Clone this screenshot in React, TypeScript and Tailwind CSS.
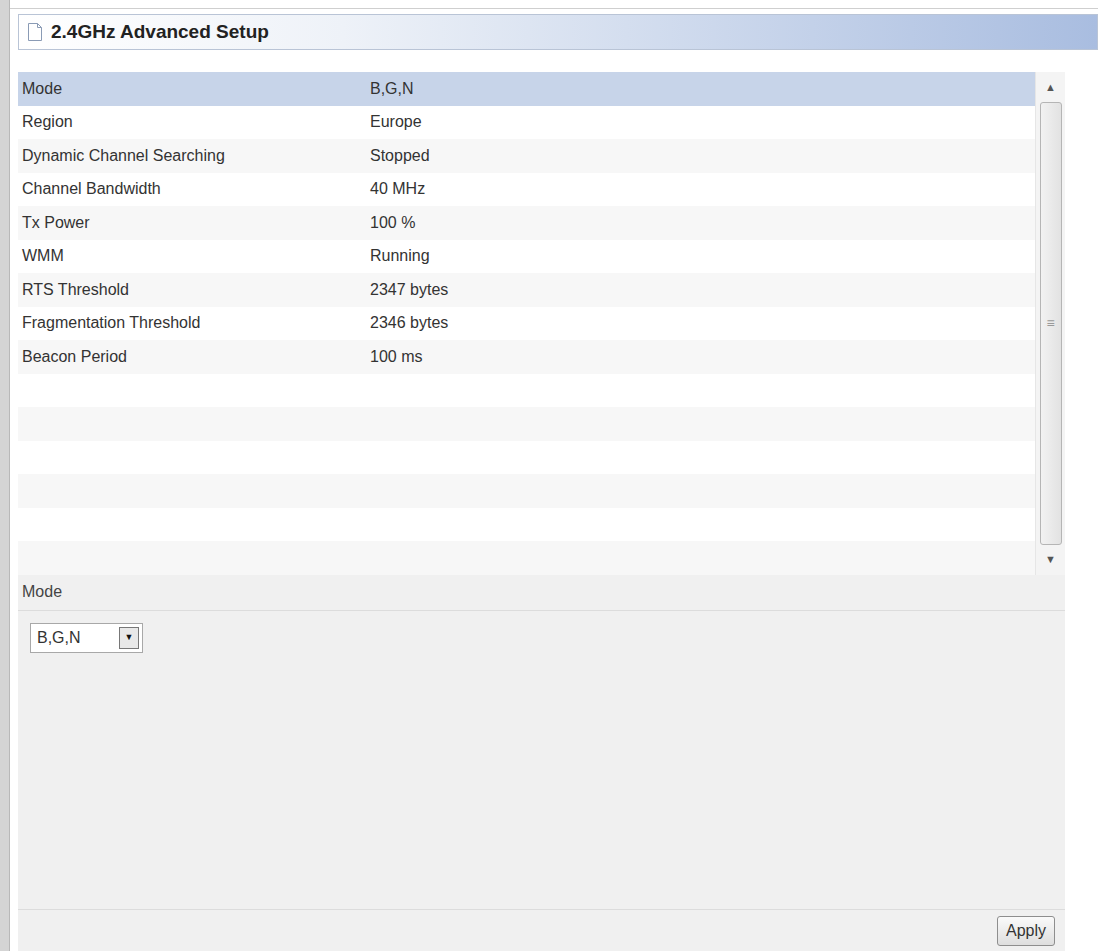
const rows: [string, string][] = [
  ["Mode", "B,G,N"],
  ["Region", "Europe"],
  ["Dynamic Channel Searching", "Stopped"],
  ["Channel Bandwidth", "40 MHz"],
  ["Tx Power", "100 %"],
  ["WMM", "Running"],
  ["RTS Threshold", "2347 bytes"],
  ["Fragmentation Threshold", "2346 bytes"],
  ["Beacon Period", "100 ms"],
  ["", ""], ["", ""], ["", ""], ["", ""], ["", ""], ["", ""],
];

const App = () => {
  return (
    <div className="w-[1098px] h-[951px] bg-white flex" style={{ fontFamily: '"Liberation Sans", Arial, sans-serif' }}>
      <div className="w-[10px] bg-[#d4d4d4] border-r border-[#b8b8b8]" />
      <div className="flex-1 flex flex-col pt-[8px]">
        <div className="border-t border-[#cfcfcf] pl-[8px] pt-[5px] flex-1 flex flex-col">
          <div className="h-[36px] flex items-center gap-2 pl-[8px] border border-[#b9c4d6] bg-[linear-gradient(to_right,#ffffff_0%,#eef2f8_30%,#a9bde0_100%)]">
            <svg width="16" height="20" viewBox="0 0 16 20">
              <path d="M1.5 1.5h9l4 4v13h-13z" fill="#fff" stroke="#8a9bb5" />
              <path d="M10.5 1.5v4h4" fill="none" stroke="#8a9bb5" />
            </svg>
            <span className="text-[19px] font-bold text-[#222]">2.4GHz Advanced Setup</span>
          </div>
          <div className="w-[1047px] flex-1 flex flex-col mt-[22px]">
            <div className="flex">
              <div className="flex-1">
                {rows.map(([k, v], i) => (
                  <div
                    key={i}
                    className={`h-[33.5px] flex items-center text-[16px] text-[#333] ${i === 0 ? "bg-[#c7d4e9]" : i % 2 === 1 ? "bg-white" : "bg-[#f7f7f7]"}`}
                  >
                    <span className="w-[352px] pl-[4px]">{k}</span>
                    <span>{v}</span>
                  </div>
                ))}
              </div>
              <div className="w-[30px] bg-[#f4f4f4] flex flex-col items-center border-l border-[#e6e6e6]">
                <div className="h-[30px] flex items-center text-[#555] text-[11px]">▲</div>
                <div className="flex-1 w-[22px] rounded-[3px] border border-[#b5b5b5] bg-[linear-gradient(to_right,#f2f2f2,#e2e2e2)] flex items-center justify-center">
                  <span className="text-[#999] text-[14px] leading-none">≡</span>
                </div>
                <div className="h-[30px] flex items-center text-[#555] text-[11px]">▼</div>
              </div>
            </div>
            <div className="flex-1 bg-[#f0f0f0] flex flex-col">
              <div className="h-[36px] flex items-center pl-[4px] text-[16px] text-[#444] border-b border-[#dcdcdc]">Mode</div>
              <div className="pl-[12px] pt-[12px] flex-1">
                <div className="w-[113px] h-[30px] bg-white border border-[#a8a8a8] flex items-center justify-between pl-[6px] pr-[3px]">
                  <span className="text-[16px] text-[#333]">B,G,N</span>
                  <div className="w-[20px] h-[22px] border border-[#777] bg-[#e8e8e8] flex items-center justify-center text-[9px] text-[#111]">▼</div>
                </div>
              </div>
              <div className="h-[42px] border-t border-[#dcdcdc] flex items-center justify-end pr-[10px]">
                <button className="h-[30px] px-[8px] border border-[#8e8e8e] rounded-[3px] bg-[linear-gradient(#fafafa,#dedede)] text-[16px] text-[#333]">Apply</button>
              </div>
            </div>
          </div>
        </div>
      </div>
    </div>
  );
};
export default App;
